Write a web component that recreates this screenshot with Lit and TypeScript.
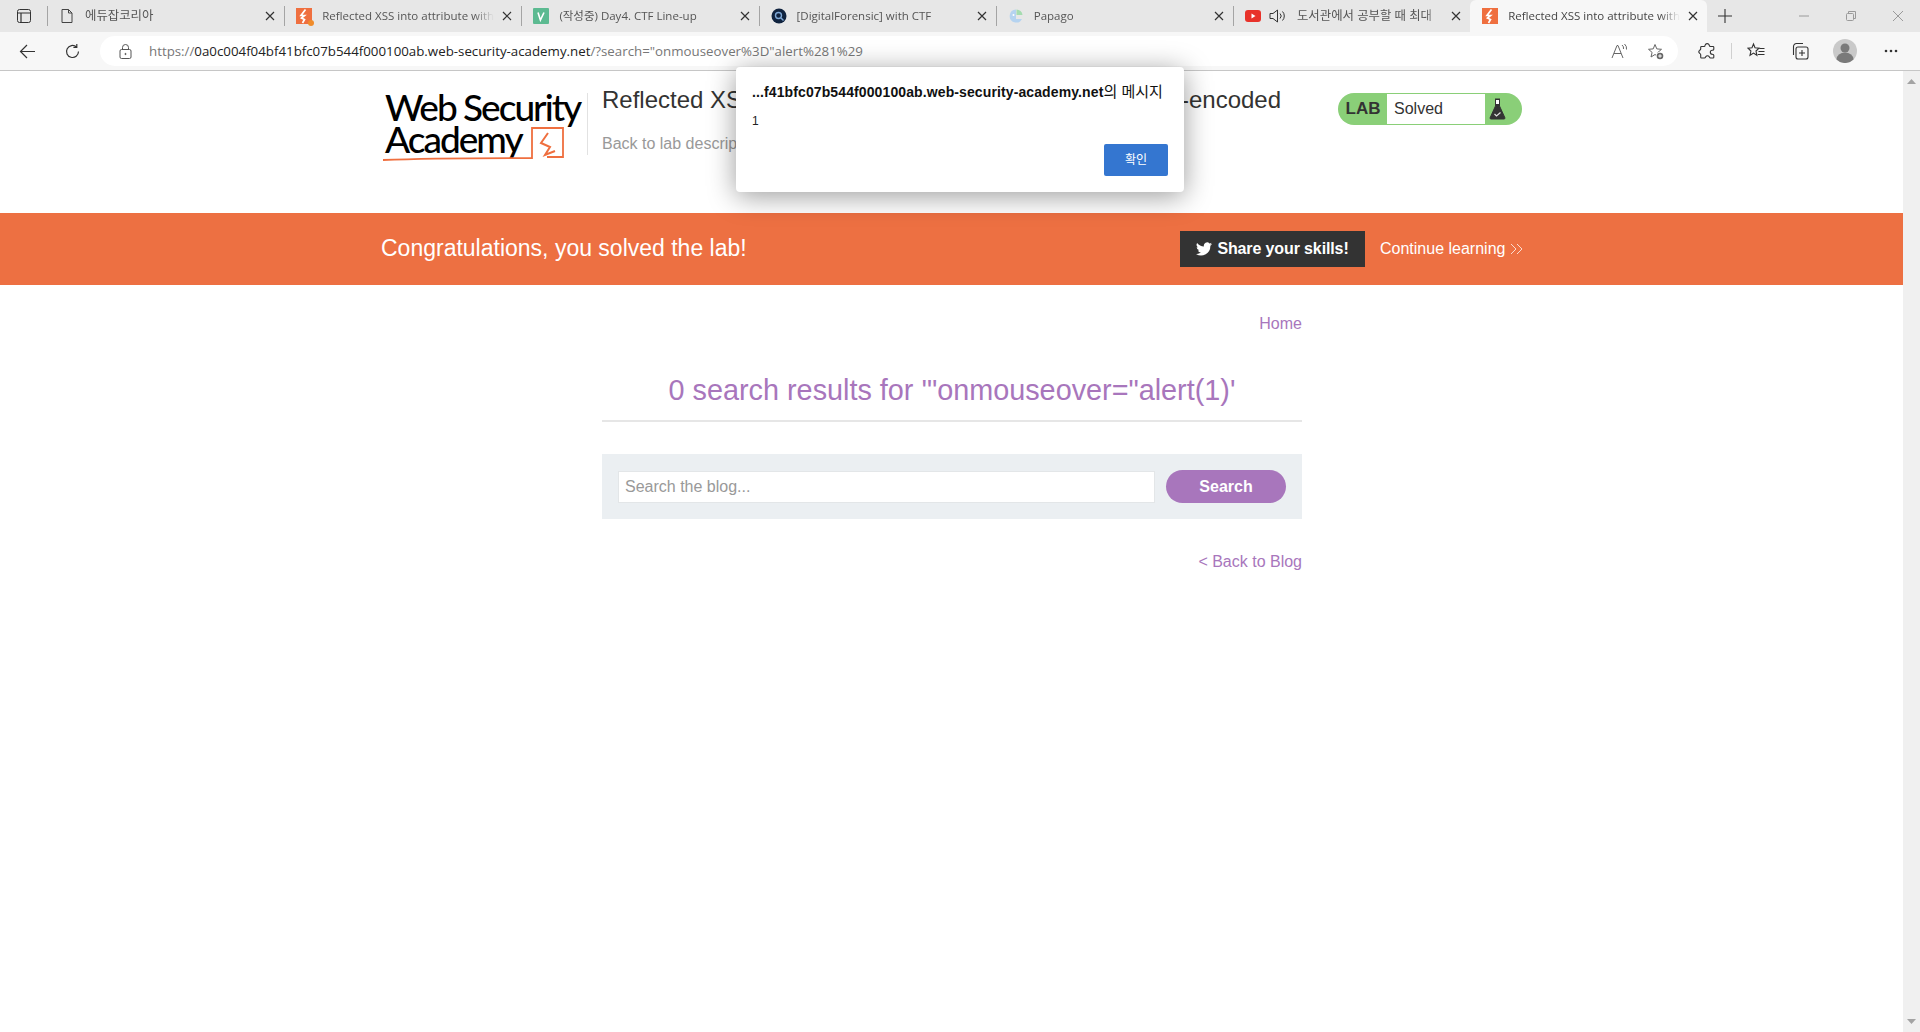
import { LitElement, html, css, svg } from "lit";
import { customElement } from "lit/decorators.js";

const closeIcon = html`<svg class="x" viewBox="0 0 10 10"><path d="M1 1l8 8M9 1l-8 8"/></svg>`;
const burp = (dot: boolean) => html`<svg class="fav" viewBox="0 0 16 16"><rect width="16" height="16" fill="#ef6f3f"/><path d="M9.500 1.500L5 7.500h3.500L5.500 10l3 1.500L6.500 15" fill="none" stroke="#fff" stroke-width="1.700"/>${dot ? svg`<circle cx="15" cy="15" r="3" fill="#f08c2a"/>` : ""}</svg>`;

const tabs = [
  { icon: html`<svg class="fav" viewBox="0 0 16 16"><path d="M3 1.500h6.500L13 5v9.500H3zM9.500 1.500V5H13" fill="none" stroke="#444" stroke-width="1"/></svg>`, t: "에듀잡코리아", ko: true },
  { icon: burp(true), t: "Reflected XSS into attribute with" },
  { icon: html`<svg class="fav" viewBox="0 0 16 16"><rect width="16" height="16" rx="1" fill="#5cba91"/><path d="M5 4.500l2.400 7.500L11 4.500" fill="none" stroke="#fff" stroke-width="1.600"/></svg>`, t: "(작성중) Day4. CTF Line-up" },
  { icon: html`<svg class="fav" viewBox="0 0 16 16"><circle cx="8" cy="8" r="7.500" fill="#10233f"/><circle cx="7.500" cy="7.500" r="3" fill="none" stroke="#7fa9d8" stroke-width="1.400"/><path d="M10 10l2.500 2.500" stroke="#7fa9d8" stroke-width="1.400"/></svg>`, t: "[DigitalForensic] with CTF" },
  { icon: html`<svg class="fav" viewBox="0 0 16 16"><path d="M8 1.500A6.500 6.500 0 1 0 14 11H8z" fill="#b5d3f0"/><path d="M8.500 1.500A6 6 0 0 1 14.500 7H8.500z" fill="#a5dcb0"/><circle cx="5.500" cy="7" r="1" fill="#fff"/></svg>`, t: "Papago" },
  { icon: html`<svg class="fav" viewBox="0 0 16 16"><rect y="2" width="16" height="12" rx="3" fill="#e8322a"/><path d="M6.500 5.500v5l4-2.500z" fill="#fff"/></svg>`, t: "도서관에서 공부할 때 최대", audio: true, ko: true },
  { icon: burp(false), t: "Reflected XSS into attribute with", active: true },
];

@customElement("app-root")
export class AppRoot extends LitElement {
  static styles = css`
    :host { display: block; position: relative; width: 1920px; height: 1032px; overflow: hidden; background: #fff; font-family: "Liberation Sans", Arial, sans-serif; }
    .strip { height: 32px; background: #e7e7e7; display: flex; align-items: stretch; font-family: "Open Sans", "Noto Sans CJK KR", sans-serif; }
    .side { width: 47px; display: flex; align-items: center; justify-content: center; flex: none; }
    .side svg { width: 16px; height: 16px; fill: none; stroke: #333; stroke-width: 1; }
    .tab { width: 237.200px; flex: none; display: flex; align-items: center; position: relative; padding: 0 9px 0 12px; box-sizing: border-box; color: #555; font-size: 11.500px; }
    .tab::before { content: ""; position: absolute; left: 0; top: 6px; bottom: 6px; width: 1px; background: #a4a4a4; }
    .tab.active { background: #f7f7f7; border-radius: 6px 6px 0 0; color: #444; }
    .tab.active::before { display: none; }
    .fav { width: 16px; height: 16px; flex: none; overflow: visible; }
    .title { flex: 1; min-width: 0; margin-left: 10px; padding-bottom: 2px; white-space: nowrap; overflow: hidden; -webkit-mask-image: linear-gradient(90deg, #000 88%, transparent); mask-image: linear-gradient(90deg, #000 88%, transparent); }
    .ko { font-size: 12.400px; }
    .spk { width: 18px; height: 16px; flex: none; margin-left: 8px; fill: none; stroke: #333; stroke-width: 1; }
    .x { width: 10px; height: 10px; flex: none; margin-left: 8px; stroke: #333; stroke-width: 1.200; fill: none; }
    .plus { width: 36px; flex: none; display: flex; align-items: center; justify-content: center; }
    .plus svg { width: 14px; height: 14px; stroke: #333; stroke-width: 1.100; }
    .spacer { flex: 1; }
    .win { display: flex; align-items: center; gap: 37px; padding-right: 17px; }
    .win svg { width: 10px; height: 10px; fill: none; stroke: #9a9a9a; stroke-width: 1; }
    .bar { height: 38px; background: #f7f7f7; border-bottom: 1px solid #c6c6c6; display: flex; align-items: center; }
    .nav { width: 100px; flex: none; display: flex; align-items: center; gap: 28px; padding-left: 19px; box-sizing: border-box; }
    .nav svg { width: 17px; height: 17px; fill: none; stroke: #333; stroke-width: 1.200; }
    .omni { width: 1578px; flex: none; height: 30px; background: #fff; border-radius: 15px; display: flex; align-items: center; box-sizing: border-box; padding: 0 14px 0 19px; }
    .omni .lock { width: 13px; height: 15px; fill: none; stroke: #555; stroke-width: 1; }
    .url { margin-left: 17px; font-family: "Open Sans", sans-serif; font-size: 13.300px; color: #777; white-space: nowrap; flex: 1; }
    .url b { font-weight: 400; color: #222; }
    .omni .rt { width: 17px; height: 17px; fill: none; stroke: #666; stroke-width: 1; margin-left: 19px; overflow: visible; }
    .tools { flex: 1; display: flex; align-items: center; padding-left: 20px; }
    .tools svg { flex: none; fill: none; stroke: #333; stroke-width: 1.100; width: 18px; height: 18px; }
    .sep { width: 1px; height: 16px; background: #d0d0d0; margin: 0 15px; }
    .coll { margin-left: 26px; }
    .avatar { margin-left: 24px; width: 24px !important; height: 24px !important; stroke: none !important; }
    .dots { margin-left: 25px; stroke: none !important; fill: #333 !important; }
    .page { height: 961px; display: flex; }
    .content { flex: 1; min-width: 0; }
    .scroll { width: 17px; flex: none; background: #f0f0f0; display: flex; flex-direction: column; justify-content: space-between; align-items: center; padding: 8px 0; box-sizing: border-box; }
    .scroll svg { width: 9px; height: 5px; fill: #a3a3a3; }
    .head { height: 142px; padding-left: 381px; padding-top: 14px; display: flex; box-sizing: border-box; }
    .logo { width: 206px; height: 76px; margin-top: 4px; padding-top: 2px; box-sizing: border-box; position: relative; flex: none; color: #000; font-family: "Lato", "Liberation Sans", sans-serif; }
    .logo .l { font-size: 37px; line-height: 32px; letter-spacing: -2px; font-weight: 500; padding-left: 4px; white-space: nowrap; }
    .logo svg { position: absolute; left: 0; top: 0; width: 206px; height: 76px; fill: none; }
    .vline { width: 1px; height: 62px; background: #e2e2e2; margin: 8px 14px 0 0; flex: none; }
    .htext { width: 715px; flex: none; }
    .htext h2 { margin: 0; font-weight: 400; font-size: 24px; line-height: 30px; color: #333332; white-space: nowrap; }
    .htext a { display: block; margin-top: 17px; color: #999; font-size: 16px; line-height: 24px; }
    .badge { width: 184px; height: 32px; margin-top: 8px; margin-left: 21px; flex: none; border-radius: 16px; background: #8acf78; display: flex; align-items: stretch; padding: 1px 0; box-sizing: border-box; color: #333; }
    .badge b { width: 49px; text-align: center; font-size: 17px; line-height: 30px; padding-left: 1px; box-sizing: border-box; }
    .badge span { width: 98px; background: #fff; font-size: 16px; line-height: 30px; padding-left: 7px; box-sizing: border-box; }
    .badge i { flex: 1; display: flex; align-items: center; justify-content: center; padding-right: 12px; }
    .badge svg { width: 17px; height: 22px; }
    .banner { height: 72px; background: #ed7042; display: flex; align-items: center; padding-left: 381px; color: #fff; }
    .banner h4 { margin: 0 0 2px; width: 799px; flex: none; font-weight: 400; font-size: 23px; }
    .share { width: 185px; height: 36px; background: #333; display: flex; align-items: center; justify-content: center; gap: 5px; font-weight: 700; font-size: 16px; letter-spacing: -.12px; box-sizing: border-box; }
    .share svg { width: 16px; height: 14px; fill: #fff; }
    .cont { margin-left: 15px; font-size: 16px; display: flex; align-items: center; gap: 5px; white-space: nowrap; }
    .cont svg { width: 13px; height: 12px; fill: none; stroke: #fff; stroke-width: 1; opacity: .75; }
    main { width: 700px; margin-left: 602px; color: #a876bc; }
    .home { text-align: right; font-size: 16px; line-height: 24px; padding-top: 27px; }
    main h1 { margin: 36px 0 0; font-weight: 400; font-size: 28.800px; line-height: 36px; text-align: center; padding-bottom: 12px; border-bottom: 2px solid #e6e6e6; }
    .search { margin-top: 32px; height: 65px; background: #ebeff2; display: flex; align-items: center; padding: 0 16px; gap: 11px; box-sizing: border-box; }
    .input { width: 537px; height: 32px; background: #fff; border: 1px solid #e3e6e8; box-sizing: border-box; color: #999; font-size: 16px; line-height: 30px; padding-left: 6px; }
    .btn { width: 120px; height: 33px; border-radius: 17px; background: #a876bc; color: #fff; font-weight: 700; font-size: 16px; text-align: center; line-height: 33px; }
    .back { text-align: right; font-size: 16px; line-height: 24px; margin-top: 31px; }
    .dialog { position: absolute; left: 736px; top: 67px; width: 448px; height: 125px; background: #fff; border-radius: 4px; box-shadow: 0 4px 28px rgba(0,0,0,.4); box-sizing: border-box; padding: 16px; display: flex; flex-direction: column; font-family: "Liberation Sans", "Noto Sans CJK KR", sans-serif; }
    .dt { font-size: 14px; line-height: 18px; font-weight: 700; color: #111; white-space: nowrap; letter-spacing: .11px; }
    .dt span { font-weight: 400; font-size: 15px; letter-spacing: 0; }
    .dm { font-size: 12px; margin-top: 13px; line-height: 14px; color: #222; }
    .ok { align-self: flex-end; margin-top: auto; width: 64px; height: 32px; background: #3476d0; border-radius: 2px; color: #fff; font-size: 12px; line-height: 32px; text-align: center; }
  `;

  render() {
    return html`
      <div class="strip">
        <div class="side"><svg viewBox="0 0 16 16"><rect x="1.500" y="1.500" width="13" height="13" rx="2"/><path d="M1.500 5h13M5 5v9.500" stroke-width="1.200"/></svg></div>
        ${tabs.map((t) => html`<div class="tab ${t.active ? "active" : ""}">
          ${t.icon}
          ${t.audio ? html`<svg class="spk" viewBox="0 0 18 16"><path d="M1 5.500h3L8.500 2v12L4 10.500H1zM11 5.500a3.500 3.500 0 0 1 0 5M13.500 3.500a6.500 6.500 0 0 1 0 9"/></svg>` : ""}
          <span class="title ${t.ko ? "ko" : ""}">${t.t}</span>
          ${closeIcon}
        </div>`)}
        <div class="plus"><svg viewBox="0 0 14 14"><path d="M7 0v14M0 7h14"/></svg></div>
        <div class="spacer"></div>
        <div class="win">
          <svg viewBox="0 0 10 10"><path d="M0 5h10"/></svg>
          <svg viewBox="0 0 10 10"><rect x=".5" y="2.500" width="7" height="7" rx="1"/><path d="M2.500 2.500V.5h7v7h-2"/></svg>
          <svg viewBox="0 0 10 10"><path d="M0 0l10 10M10 0L0 10"/></svg>
        </div>
      </div>
      <div class="bar">
        <div class="nav">
          <svg viewBox="0 0 17 17"><path d="M16 8.500H1.500M8 2L1.500 8.500 8 15"/></svg>
          <svg viewBox="0 0 17 17"><path d="M14.500 8.500a6 6 0 1 1-2-4.500M12.800 1v3.400H9.400"/></svg>
        </div>
        <div class="omni">
          <svg class="lock" viewBox="0 0 13 15"><rect x="1" y="5.500" width="11" height="9" rx="1.500"/><path d="M3.500 5.500V3.500a3 3 0 0 1 6 0v2"/><circle cx="6.500" cy="10" r=".6" fill="#555"/></svg>
          <span class="url">https://<b>0a0c004f04bf41bfc07b544f000100ab.web-security-academy.net</b>/?search="onmouseover%3D"alert%281%29</span>
          <svg class="rt" viewBox="0 0 17 17"><path d="M1 15L6 2.500h1L12 15M3 10.500h7M11 2a4 4 0 0 1 1.500 4M13.500 1a6 6 0 0 1 2 5.500"/></svg>
          <svg class="rt" viewBox="0 0 17 17"><path d="M8 1.500L9.800 5.900 14.500 6.300 10.900 9.400 12 14 8 11.500 4 14 5.100 9.400 1.500 6.300 6.200 5.900Z"/><circle cx="13" cy="13" r="4" fill="#fff" stroke="none"/><circle cx="13" cy="13" r="3.300" fill="#666" stroke="none"/><path d="M13 11.200v3.600M11.200 13h3.600" stroke="#fff"/></svg>
        </div>
        <div class="tools">
          <svg viewBox="0 0 18 18"><path d="M7 3.500a2.200 2.200 0 0 1 4.200-.5c.3.8 0 1.500 1.300 1.500h2.500a.8.8 0 0 1 .8.8v2c0 1-1 1-1.500 1a2 2 0 0 0 0 4c.5 0 1.500 0 1.500 1v1.900a.8.8 0 0 1-.8.8h-2.500c-1 0-.8-.8-1.300-1.400a2.100 2.100 0 0 0-3.400 0c-.5.6-.3 1.400-1.300 1.400H3.500a.8.8 0 0 1-.8-.8v-2.500c0-1-.7-.9-1.200-1.500a2 2 0 0 1 0-2.800c.5-.6 1.200-.5 1.200-1.500V5.300a.8.8 0 0 1 .8-.8H6C7 4.500 7 4 7 3.500z"/></svg>
          <div class="sep"></div>
          <svg viewBox="0 0 18 18"><path d="M6.500 2L8 5.800 12 6.200 9 9l.9 4.300-3.400-2.200-3.500 2.200L3.900 9 1 6.200 5 5.800zM12.500 6.500h5M11.500 9.500h6M10.800 12.500h6.700"/></svg>
          <svg class="coll" viewBox="0 0 18 18"><rect x="5" y="5" width="12" height="12" rx="2"/><path d="M11 8v6M8 11h6M2.500 13V4.500a3 3 0 0 1 3-3h6.500"/></svg>
          <svg class="avatar" viewBox="0 0 24 24"><circle cx="12" cy="12" r="12" fill="#c9c9c9"/><circle cx="12" cy="9" r="4.500" fill="#7a7a7a"/><path d="M3.500 20.500a8.500 7 0 0 1 17 0A12 12 0 0 1 3.500 20.500z" fill="#7a7a7a"/></svg>
          <svg class="dots" viewBox="0 0 18 18"><circle cx="4" cy="9" r="1.300"/><circle cx="9" cy="9" r="1.300"/><circle cx="14" cy="9" r="1.300"/></svg>
        </div>
      </div>
      <div class="page">
        <div class="content">
          <div class="head">
            <div class="logo">
              <div class="l">Web Security</div>
              <div class="l">Academy</div>
              <svg viewBox="0 0 206 76"><path d="M2 71C50 69 100 69 151 69V39H182V68H166" stroke="#ef6f3f" stroke-width="1.800"/><path d="M167 44L160 54L169 58L164 66L174 62" stroke="#ef6f3f" stroke-width="2"/></svg>
            </div>
            <div class="vline"></div>
            <div class="htext">
              <h2>Reflected XSS into attribute with angle brackets HTML-encoded</h2>
              <a>Back to lab description</a>
            </div>
            <div class="badge">
              <b>LAB</b><span>Solved</span>
              <i><svg viewBox="0 0 17 22"><path d="M6 1h5M6.500 1v7L1 20a1 1 0 0 0 1 1h13a1 1 0 0 0 1-1L10.500 8V1" fill="#333" stroke="#333"/><path d="M7 2h3v4H7z" fill="#fff"/><path d="M5.500 16l2 2 4-3.500" fill="none" stroke="#ddd" stroke-width="1.200"/></svg></i>
            </div>
          </div>
          <div class="banner">
            <h4>Congratulations, you solved the lab!</h4>
            <div class="share"><svg viewBox="0 0 24 20"><path d="M24 2.400a10 10 0 0 1-2.800.8 5 5 0 0 0 2.200-2.700 10 10 0 0 1-3.100 1.200 4.900 4.900 0 0 0-8.400 4.500A14 14 0 0 1 1.700 1a4.900 4.900 0 0 0 1.500 6.600 5 5 0 0 1-2.200-.6 4.900 4.900 0 0 0 3.900 4.900 5 5 0 0 1-2.200.1 4.900 4.900 0 0 0 4.600 3.400A9.900 9.900 0 0 1 0 17.400 14 14 0 0 0 21.500 5a10 10 0 0 0 2.500-2.600z"/></svg>Share your skills!</div>
            <div class="cont">Continue learning <svg viewBox="0 0 13 12"><path d="M1 1l5 5-5 5M7 1l5 5-5 5"/></svg></div>
          </div>
          <main>
            <div class="home">Home</div>
            <h1>0 search results for '"onmouseover="alert(1)'</h1>
            <div class="search"><div class="input">Search the blog...</div><div class="btn">Search</div></div>
            <div class="back">&lt; Back to Blog</div>
          </main>
        </div>
        <div class="scroll">
          <svg viewBox="0 0 9 5"><path d="M4.500 0L9 5H0z"/></svg>
          <svg viewBox="0 0 9 5"><path d="M0 0h9L4.500 5z"/></svg>
        </div>
      </div>
      <div class="dialog">
        <div class="dt">...f41bfc07b544f000100ab.web-security-academy.net<span>의 메시지</span></div>
        <div class="dm">1</div>
        <div class="ok">확인</div>
      </div>
    `;
  }
}
